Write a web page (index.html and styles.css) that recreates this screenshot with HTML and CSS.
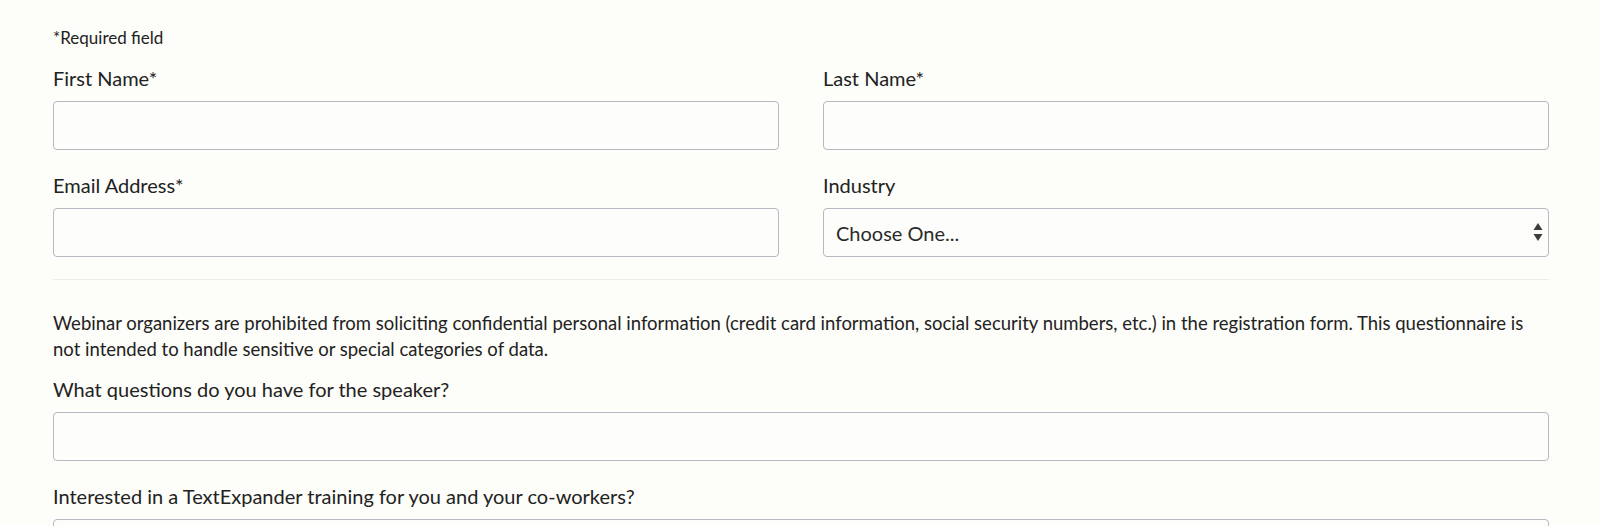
FILE: index.html
```html
<!DOCTYPE html>
<html lang="en">
<head>
<meta charset="utf-8">
<title>Registration</title>
<link rel="stylesheet" href="styles.css">
</head>
<body>
<form class="form">
  <p class="required-note">*Required field</p>
  <div class="grid">
    <div class="field">
      <label class="label" for="fn">First Name*</label>
      <input class="input" id="fn" type="text">
    </div>
    <div class="field">
      <label class="label" for="ln">Last Name*</label>
      <input class="input" id="ln" type="text">
    </div>
    <div class="field">
      <label class="label" for="em">Email Address*</label>
      <input class="input" id="em" type="text">
    </div>
    <div class="field">
      <label class="label" for="ind">Industry</label>
      <div class="select-wrap">
        <select class="input select" id="ind">
          <option>Choose One...</option>
        </select>
        <svg class="select-arrow" width="10" height="19" viewBox="0 0 10 19" aria-hidden="true">
          <path d="M5 0 L9.5 7 L0.5 7 Z" fill="#3c3c3c"/>
          <path d="M0.5 11 L9.5 11 L5 18 Z" fill="#3c3c3c"/>
        </svg>
      </div>
    </div>
  </div>
  <hr class="divider">
  <p class="notice">Webinar organizers are prohibited from soliciting confidential personal information (credit card information, social security numbers, etc.) in the registration form. This questionnaire is not intended to handle sensitive or special categories of data.</p>
  <div class="field single">
    <label class="label" for="q1">What questions do you have for the speaker?</label>
    <input class="input" id="q1" type="text">
  </div>
  <div class="field single">
    <label class="label" for="q2">Interested in a TextExpander training for you and your co-workers?</label>
    <input class="input" id="q2" type="text">
  </div>
</form>
</body>
</html>
```

FILE: styles.css
```css
html, body {
  margin: 0;
  padding: 0;
  background: #fdfdf9;
}

body {
  font-family: Lato, "Open Sans", "Liberation Sans", sans-serif;
  color: #222222;
}

.form {
  padding: 28px 51px 0 53px;
}

.required-note {
  margin: 0;
  font-size: 17px;
  line-height: 20px;
}

.grid {
  margin-top: 17px;
  display: grid;
  grid-template-columns: 1fr 1fr;
  column-gap: 44px;
  row-gap: 22px;
}

.field {
  display: flex;
  flex-direction: column;
}

.label {
  font-size: 20px;
  line-height: 26px;
  margin-bottom: 10px;
}

.input {
  box-sizing: border-box;
  height: 49px;
  width: 100%;
  margin: 0;
  border: 1px solid #b8b8c2;
  border-radius: 4px;
  background: #fdfdfb;
  font-family: Lato, "Open Sans", "Liberation Sans", sans-serif;
  font-size: 20px;
  color: #2a2a2a;
  padding: 0 12px;
  outline: none;
}

.select-wrap {
  position: relative;
}

.select {
  appearance: none;
  -webkit-appearance: none;
  padding-right: 36px;
}

.select-arrow {
  position: absolute;
  right: 6px;
  top: 15px;
  pointer-events: none;
}

.divider {
  border: 0;
  border-top: 1px solid #ececea;
  margin: 22px 0 0;
  height: 0;
}

.notice {
  margin: 30px 0 14px;
  font-size: 18.5px;
  line-height: 26px;
}

.single {
  margin-bottom: 22px;
}
```
